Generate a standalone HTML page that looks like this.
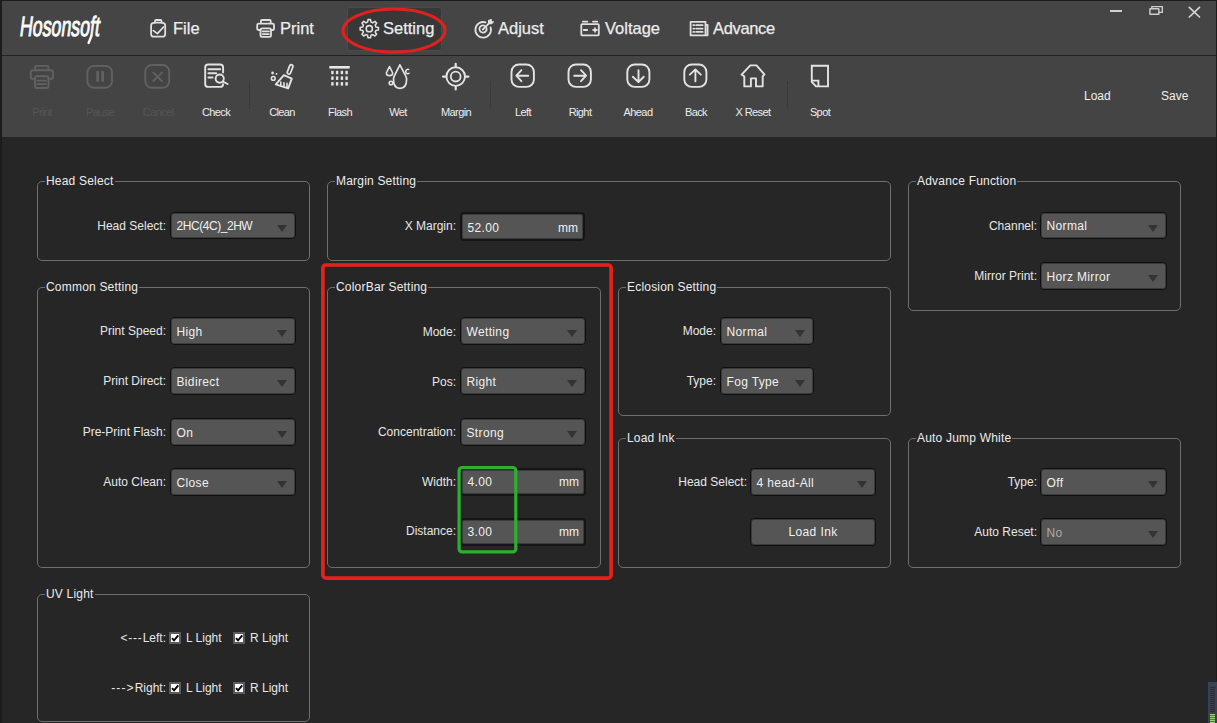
<!DOCTYPE html>
<html><head><meta charset="utf-8"><title>Hosonsoft</title>
<style>
*{box-sizing:border-box;margin:0;padding:0}
html,body{width:1217px;height:723px;overflow:hidden;background:#262626;font-family:"Liberation Sans",sans-serif}
#win{position:absolute;left:0;top:0;width:1217px;height:723px;background:#262626;border-left:2px solid #1c1c1c;border-right:1px solid #1c1c1c;border-top:1px solid #1c1c1c}
#title{position:absolute;left:0;top:0;width:1214px;height:54px;background:#454545}
#sep{position:absolute;left:0;top:54px;width:1214px;height:1px;background:#222}
#tool{position:absolute;left:0;top:55px;width:1214px;height:81px;background:#444444}
.abs{position:absolute}
.gb{position:absolute;border:1px solid #6e6e6e;border-radius:5px}
.gt{position:absolute;left:7px;top:-8px;background:#262626;padding:0 1px;font-size:12px;letter-spacing:0.2px;line-height:14px;color:#ececec;white-space:nowrap}
.lb{position:absolute;font-size:12px;line-height:20px;color:#e6e6e6;white-space:nowrap;text-align:right}
.lb.dis{color:#bdbdbd}
.dd,.inp{position:absolute;background:#555555;border:1px solid #0e0e0e;border-radius:4px;box-shadow:inset 0 0 0 1px rgba(0,0,0,0.3)}

.dd.dis .ddt{color:#a9a9a9}
.inp{border:2px solid #151515;border-top-width:2px}
.ddt{position:absolute;left:5.5px;top:0;font-size:12px;letter-spacing:0.35px;color:#f0f0f0;white-space:nowrap}
.mm{position:absolute;right:5px;top:0;font-size:12px;color:#f0f0f0}
.arr{position:absolute;right:8px;top:50%;margin-top:-1px;width:0;height:0;border-left:5.5px solid transparent;border-right:5.5px solid transparent;border-top:7px solid #333}
.btn{position:absolute;background:#555;border:1px solid #0e0e0e;box-shadow:inset 0 0 0 1px rgba(0,0,0,0.3);border-radius:4px;text-align:center;font-size:12px;letter-spacing:0.4px;color:#f0f0f0}
.cb{position:absolute;width:12px;height:12px;background:#fff;border:2px solid #5a5a5a}
.cb::after{content:"";position:absolute;left:2.5px;top:0.5px;width:2.5px;height:5.5px;border:solid #000;border-width:0 2px 2px 0;transform:rotate(40deg)}
.cbl{position:absolute;font-size:12px;line-height:20px;color:#e6e6e6;white-space:nowrap}
.menu{position:absolute;top:18px;font-size:16.5px;-webkit-text-stroke:0.25px #ececec;line-height:20px;color:#ececec;white-space:nowrap}
.tl{position:absolute;top:104px;font-size:11px;letter-spacing:-0.6px;line-height:16px;color:#ededed;white-space:nowrap;text-align:center;width:60px}
.tl.dis{color:#555}
</style></head><body>
<div id="win">
<div id="title"></div><div id="sep"></div><div id="tool"></div>
</div>
<div class="gb" style="left:37px;top:181px;width:273px;height:80px"><span class="gt">Head Select</span></div>
<div class="lb" style="right:1051px;top:216px">Head Select:</div>
<div class="dd" style="left:170px;top:212px;width:126px;height:27px"><span class="ddt" style="line-height:27px"><span style="letter-spacing:-0.45px">2HC(4C)_2HW</span></span><i class="arr"></i></div>
<div class="gb" style="left:327px;top:181px;width:564px;height:80px"><span class="gt">Margin Setting</span></div>
<div class="lb" style="right:761px;top:216px">X Margin:</div>
<div class="inp" style="left:460px;top:212px;width:125px;height:29px"><span class="ddt" style="line-height:25px;top:2px">52.00</span><span class="mm" style="line-height:25px;top:2px">mm</span></div>
<div class="gb" style="left:908px;top:181px;width:273px;height:130px"><span class="gt">Advance Function</span></div>
<div class="lb" style="right:180px;top:216px">Channel:</div>
<div class="dd" style="left:1040px;top:212px;width:127px;height:27px"><span class="ddt" style="line-height:27px">Normal</span><i class="arr"></i></div>
<div class="lb" style="right:180px;top:266px">Mirror Print:</div>
<div class="dd" style="left:1040px;top:262px;width:127px;height:28px"><span class="ddt" style="line-height:28px">Horz Mirror</span><i class="arr"></i></div>
<div class="gb" style="left:37px;top:287px;width:273px;height:281px"><span class="gt">Common Setting</span></div>
<div class="lb" style="right:1051px;top:321px">Print Speed:</div>
<div class="dd" style="left:170px;top:317px;width:126px;height:28px"><span class="ddt" style="line-height:28px">High</span><i class="arr"></i></div>
<div class="lb" style="right:1051px;top:371px">Print Direct:</div>
<div class="dd" style="left:170px;top:367px;width:126px;height:28px"><span class="ddt" style="line-height:28px">Bidirect</span><i class="arr"></i></div>
<div class="lb" style="right:1051px;top:422px">Pre-Print Flash:</div>
<div class="dd" style="left:170px;top:418px;width:126px;height:28px"><span class="ddt" style="line-height:28px">On</span><i class="arr"></i></div>
<div class="lb" style="right:1051px;top:472px">Auto Clean:</div>
<div class="dd" style="left:170px;top:468px;width:126px;height:28px"><span class="ddt" style="line-height:28px">Close</span><i class="arr"></i></div>
<div class="gb" style="left:327px;top:287px;width:274px;height:281px"><span class="gt">ColorBar Setting</span></div>
<div class="lb" style="right:761px;top:322px">Mode:</div>
<div class="dd" style="left:460px;top:317px;width:126px;height:28px"><span class="ddt" style="line-height:28px">Wetting</span><i class="arr"></i></div>
<div class="lb" style="right:761px;top:372px">Pos:</div>
<div class="dd" style="left:460px;top:367px;width:126px;height:28px"><span class="ddt" style="line-height:28px">Right</span><i class="arr"></i></div>
<div class="lb" style="right:761px;top:422px">Concentration:</div>
<div class="dd" style="left:460px;top:418px;width:126px;height:28px"><span class="ddt" style="line-height:28px">Strong</span><i class="arr"></i></div>
<div class="lb" style="right:761px;top:472px">Width:</div>
<div class="inp" style="left:460px;top:468px;width:126px;height:28px"><span class="ddt" style="line-height:24px;top:0px">4.00</span><span class="mm" style="line-height:24px;top:0px">mm</span></div>
<div class="lb" style="right:761px;top:521px">Distance:</div>
<div class="inp" style="left:460px;top:518px;width:126px;height:28px"><span class="ddt" style="line-height:24px;top:0px">3.00</span><span class="mm" style="line-height:24px;top:0px">mm</span></div>
<div class="gb" style="left:618px;top:287px;width:273px;height:129px"><span class="gt">Eclosion Setting</span></div>
<div class="lb" style="right:501px;top:321px">Mode:</div>
<div class="dd" style="left:720px;top:317px;width:94px;height:28px"><span class="ddt" style="line-height:28px">Normal</span><i class="arr"></i></div>
<div class="lb" style="right:501px;top:371px">Type:</div>
<div class="dd" style="left:720px;top:367px;width:94px;height:28px"><span class="ddt" style="line-height:28px">Fog Type</span><i class="arr"></i></div>
<div class="gb" style="left:618px;top:438px;width:273px;height:130px"><span class="gt">Load Ink</span></div>
<div class="lb" style="right:470px;top:472px">Head Select:</div>
<div class="dd" style="left:750px;top:468px;width:126px;height:28px"><span class="ddt" style="line-height:28px">4 head-All</span><i class="arr"></i></div>
<div class="btn" style="left:750px;top:518px;width:126px;height:28px;line-height:27px">Load Ink</div>
<div class="gb" style="left:908px;top:438px;width:273px;height:130px"><span class="gt">Auto Jump White</span></div>
<div class="lb" style="right:180px;top:472px">Type:</div>
<div class="dd" style="left:1040px;top:468px;width:127px;height:28px"><span class="ddt" style="line-height:28px">Off</span><i class="arr"></i></div>
<div class="lb" style="right:180px;top:522px">Auto Reset:</div>
<div class="dd dis" style="left:1040px;top:518px;width:127px;height:28px"><span class="ddt" style="line-height:28px">No</span><i class="arr"></i></div>
<div class="gb" style="left:37px;top:594px;width:273px;height:128px"><span class="gt">UV Light</span></div>
<div class="lb" style="right:1051px;top:628px"><span style="letter-spacing:0.8px">&lt;---</span>Left:</div>
<svg class="abs" style="left:169px;top:632px" width="12" height="12" viewBox="0 0 12 12"><rect x="1" y="1" width="10" height="10" fill="#fff" stroke="#5c5c5c" stroke-width="2"/><path d="M3 6.1 L5.1 8.4 L9.2 3.4" fill="none" stroke="#000" stroke-width="1.9"/></svg><div class="cbl" style="left:186px;top:628px">L Light</div>
<svg class="abs" style="left:233px;top:632px" width="12" height="12" viewBox="0 0 12 12"><rect x="1" y="1" width="10" height="10" fill="#fff" stroke="#5c5c5c" stroke-width="2"/><path d="M3 6.1 L5.1 8.4 L9.2 3.4" fill="none" stroke="#000" stroke-width="1.9"/></svg><div class="cbl" style="left:250px;top:628px">R Light</div>
<div class="lb" style="right:1051px;top:678px"><span style="letter-spacing:1.1px">---&gt;</span>Right:</div>
<svg class="abs" style="left:169px;top:682px" width="12" height="12" viewBox="0 0 12 12"><rect x="1" y="1" width="10" height="10" fill="#fff" stroke="#5c5c5c" stroke-width="2"/><path d="M3 6.1 L5.1 8.4 L9.2 3.4" fill="none" stroke="#000" stroke-width="1.9"/></svg><div class="cbl" style="left:186px;top:678px">L Light</div>
<svg class="abs" style="left:233px;top:682px" width="12" height="12" viewBox="0 0 12 12"><rect x="1" y="1" width="10" height="10" fill="#fff" stroke="#5c5c5c" stroke-width="2"/><path d="M3 6.1 L5.1 8.4 L9.2 3.4" fill="none" stroke="#000" stroke-width="1.9"/></svg><div class="cbl" style="left:250px;top:678px">R Light</div>
<svg class="abs" style="left:14px;top:8px" width="95" height="40" viewBox="0 0 95 40"><g transform="translate(5,28) scale(1,1.22) skewX(-9)"><text x="0" y="0" font-family="Liberation Sans" font-size="23" fill="#fafafa" stroke="#fafafa" stroke-width="0.8" textLength="80" lengthAdjust="spacingAndGlyphs">Hosonsoft</text></g><path d="M77.2 28.5 L74.6 35" stroke="#fafafa" stroke-width="2.4" stroke-linecap="round"/></svg>
<div class="abs" style="left:347px;top:7px;width:95px;height:44px;background:#383838;border:1px solid #4b4b4b;border-radius:3px"></div>
<div class="menu" style="left:173px">File</div>
<div class="menu" style="left:280px">Print</div>
<div class="menu" style="left:383px">Setting</div>
<div class="menu" style="left:498px">Adjust</div>
<div class="menu" style="left:605px">Voltage</div>
<div class="menu" style="left:713px"><span style="letter-spacing:-0.35px">Advance</span></div>
<svg class="abs" style="left:145px;top:14px" width="30" height="28" viewBox="0 0 30 28" fill="none" stroke="#e0e0e0" stroke-width="1.8" stroke-linecap="round" stroke-linejoin="round"><path d="M10 8.8 H8.9 Q6.1 8.8 6.1 11.6 V19.9 Q6.1 22.7 8.9 22.7 H17.4 Q20.2 22.7 20.2 19.9 V11.6 Q20.2 8.8 17.4 8.8 H16.4"/><rect x="10" y="6" width="6.6" height="2.6" rx="1.2"/><path d="M8.4 16.6 L12.4 19.6 L18.6 13"/></svg>
<svg class="abs" style="left:250px;top:14px" width="30" height="28" viewBox="0 0 30 28" fill="none" stroke="#e0e0e0" stroke-width="1.8" stroke-linecap="round" stroke-linejoin="round"><path d="M10.9 9 V7 Q10.9 6 11.9 6 H19.7 Q20.7 6 20.7 7 V9"/><path d="M10.5 16 H8.8 Q7.2 16 7.2 14.4 V11.4 Q7.2 9.7 8.8 9.7 H22.4 Q24 9.7 24 11.4 V14.4 Q24 16 22.4 16 H21"/><rect x="10.5" y="14.4" width="10.5" height="8.4" rx="1.6"/><path d="M12.6 17.3 H18.9 M12.6 20.1 H18.9"/></svg>
<svg class="abs" style="left:354px;top:14px" width="30" height="28" viewBox="0 0 30 28" fill="none" stroke="#e0e0e0" stroke-width="1.6" stroke-linecap="round" stroke-linejoin="round"><path d="M14.08 5.58 L16.52 5.58 L17.04 8.13 L18.72 8.82 L20.88 7.39 L22.61 9.12 L21.18 11.28 L21.87 12.96 L24.42 13.48 L24.42 15.92 L21.87 16.44 L21.18 18.12 L22.61 20.28 L20.88 22.01 L18.72 20.58 L17.04 21.27 L16.52 23.82 L14.08 23.82 L13.56 21.27 L11.88 20.58 L9.72 22.01 L7.99 20.28 L9.42 18.12 L8.73 16.44 L6.18 15.92 L6.18 13.48 L8.73 12.96 L9.42 11.28 L7.99 9.12 L9.72 7.39 L11.88 8.82 L13.56 8.13 Z"/><circle cx="15.3" cy="14.7" r="3.1"/></svg>
<svg class="abs" style="left:470px;top:14px" width="30" height="28" viewBox="0 0 30 28" fill="none" stroke="#e0e0e0" stroke-width="1.8" stroke-linecap="round" stroke-linejoin="round"><path d="M15.6 8.4 A7.8 7.8 0 1 0 20.6 13.4"/><path d="M14.6 11.8 A3.6 3.6 0 1 0 16.4 13.8"/><path d="M12.8 15.5 L19.2 9.1"/><path d="M18.6 6.6 V9.6 H21.6 L23.4 7.8 L21.4 7.6 L21.2 5.6 Z" fill="#e0e0e0" stroke-width="1.2"/></svg>
<svg class="abs" style="left:576px;top:14px" width="30" height="28" viewBox="0 0 30 28" fill="none" stroke="#e0e0e0" stroke-width="1.8" stroke-linecap="round" stroke-linejoin="round"><rect x="5.3" y="10.1" width="17.5" height="11.2" rx="0.8"/><path d="M6.9 7.6 H11.4 M17 7.6 H21.3 M7.8 16 H11.2 M17.2 16 H20.8 M19 14.2 V17.8"/></svg>
<svg class="abs" style="left:685px;top:14px" width="30" height="28" viewBox="0 0 30 28" fill="none" stroke="#e0e0e0" stroke-width="1.8" stroke-linecap="round" stroke-linejoin="round"><path d="M20.5 11 H22.6 V21.3 H5.6 V7.8 H20.5 V21.3"/><path d="M8.3 11.2 H9.3 M11.2 11.2 H17.6 M8.3 14.6 H9.3 M11.2 14.6 H17.6 M8.3 17.9 H9.3 M11.2 17.9 H17.6"/></svg>
<div class="abs" style="left:1110px;top:9.5px;width:12px;height:2px;background:#cfcfcf"></div>
<svg class="abs" style="left:1146px;top:4px" width="20" height="14" viewBox="0 0 20 14" fill="none" stroke="#cfcfcf" stroke-width="1.4" stroke-linecap="round" stroke-linejoin="round"><rect x="3.9" y="4.7" width="9" height="5.6" rx="0.4"/><path d="M5.8 4.5 V2.6 H16.3 V8.4 H13"/></svg>
<svg class="abs" style="left:1186px;top:5px" width="16" height="14" viewBox="0 0 16 14" fill="none" stroke="#d4d4d4" stroke-width="1.7" stroke-linecap="round" stroke-linejoin="round"><path d="M3.3 2.4 L13.5 12 M13.5 2.4 L3.3 12"/></svg>
<svg class="abs" style="left:26px;top:60px" width="32" height="32" viewBox="0 0 32 32" fill="none" stroke="#616161" stroke-width="1.9" stroke-linecap="round" stroke-linejoin="round"><path d="M9.2 9.3 V7 Q9.2 5.9 10.3 5.9 H21.4 Q22.5 5.9 22.5 7 V9.3"/><path d="M9 18.9 H6.8 Q4.8 18.9 4.8 16.9 V12.3 Q4.8 10.3 6.8 10.3 H24.9 Q26.9 10.3 26.9 12.3 V16.9 Q26.9 18.9 24.9 18.9 H22.5"/><rect x="9" y="16.3" width="13.5" height="11.7" rx="2"/><path d="M11.2 20.6 H20 M11.2 24.1 H20"/></svg>
<svg class="abs" style="left:84px;top:60px" width="32" height="32" viewBox="0 0 32 32" fill="none" stroke="#616161" stroke-width="1.9" stroke-linecap="round" stroke-linejoin="round"><rect x="3.4" y="5.9" width="24.6" height="21.9" rx="6.5"/><rect x="12.2" y="11" width="2.8" height="10.7" fill="#616161" stroke="none" rx="0.4"/><rect x="17.2" y="11" width="2.8" height="10.7" fill="#616161" stroke="none" rx="0.4"/></svg>
<svg class="abs" style="left:141px;top:60px" width="32" height="32" viewBox="0 0 32 32" fill="none" stroke="#616161" stroke-width="1.9" stroke-linecap="round" stroke-linejoin="round"><rect x="4.3" y="5" width="23.9" height="22.8" rx="6.5"/><path d="M12.3 12.6 L20.9 21 M20.9 12.6 L12.3 21"/></svg>
<svg class="abs" style="left:200px;top:60px" width="32" height="32" viewBox="0 0 32 32" fill="none" stroke="#e3e3e3" stroke-width="1.9" stroke-linecap="round" stroke-linejoin="round"><path d="M23.1 12.6 V7.5 Q23.1 4.5 20.1 4.5 H8.2 Q5.2 4.5 5.2 7.5 V23.9 Q5.2 26.9 8.2 26.9 H20.1 Q23.1 26.9 23.1 24.2"/><path d="M8.4 9.3 H20.2 M8.4 13.3 H16.2 M8.4 17.5 H12.6"/><circle cx="19.7" cy="18.6" r="4.1"/><path d="M22.9 21.6 L27.6 24"/></svg>
<div class="abs" style="left:249px;top:81px;width:1px;height:28px;background:#3a3a3a"></div>
<div class="abs" style="left:490px;top:81px;width:1px;height:28px;background:#3a3a3a"></div>
<div class="abs" style="left:787px;top:81px;width:1px;height:28px;background:#3a3a3a"></div>
<svg class="abs" style="left:266px;top:60px" width="32" height="32" viewBox="0 0 32 32" fill="none" stroke="#e3e3e3" stroke-width="1.8" stroke-linecap="round" stroke-linejoin="round"><rect x="-1.7" y="-4.9" width="3.4" height="9.8" rx="1.7" transform="translate(24.1,9.4) rotate(21)" stroke-width="1.8"/><path d="M17.9 15.2 L25.8 18.7 L22.2 28.4 L9.8 24.4 Z" stroke-width="1.9"/><path d="M14.8 22 V26.2 M18 22.8 V27.2 M21 23.4 V27.8" stroke-width="1.6"/><circle cx="6.6" cy="13" r="1.4" fill="#e3e3e3" stroke="none"/><circle cx="10.5" cy="13.9" r="0.9" fill="#e3e3e3" stroke="none"/><circle cx="7.3" cy="18.4" r="1.9" stroke-width="1.5"/></svg>
<svg class="abs" style="left:324px;top:60px" width="32" height="32" viewBox="0 0 32 32" fill="none" stroke="#e3e3e3" stroke-width="1.8" stroke-linecap="round" stroke-linejoin="round"><rect x="5.3" y="6" width="20.4" height="2.6" fill="#e8e8e8" stroke="none"/><rect x="7.2" y="10.8" width="2.4" height="3.4" fill="#e3e3e3" stroke="none"/><rect x="7.2" y="16.4" width="2.4" height="3.5" fill="#e3e3e3" stroke="none"/><rect x="7.2" y="22.1" width="2.4" height="3.5" fill="#e3e3e3" stroke="none"/><rect x="11.9" y="10.8" width="2.4" height="3.4" fill="#e3e3e3" stroke="none"/><rect x="11.9" y="16.4" width="2.4" height="3.5" fill="#e3e3e3" stroke="none"/><rect x="11.9" y="22.1" width="2.4" height="3.5" fill="#e3e3e3" stroke="none"/><rect x="16.7" y="10.8" width="2.4" height="3.4" fill="#e3e3e3" stroke="none"/><rect x="16.7" y="16.4" width="2.4" height="3.5" fill="#e3e3e3" stroke="none"/><rect x="16.7" y="22.1" width="2.4" height="3.5" fill="#e3e3e3" stroke="none"/><rect x="21.4" y="10.8" width="2.4" height="3.4" fill="#e3e3e3" stroke="none"/><rect x="21.4" y="16.4" width="2.4" height="3.5" fill="#e3e3e3" stroke="none"/><rect x="21.4" y="22.1" width="2.4" height="3.5" fill="#e3e3e3" stroke="none"/></svg>
<svg class="abs" style="left:382px;top:60px" width="32" height="32" viewBox="0 0 32 32" fill="none" stroke="#e3e3e3" stroke-width="1.8" stroke-linecap="round" stroke-linejoin="round"><path d="M17.9 4.8 L12.2 16.2 Q11.5 17.8 11.5 19.6 Q11.5 28.4 17.9 28.4 Q24.6 28.4 24.6 19.6 Q24.6 17.8 23.8 16.2 Z" stroke-width="1.7"/><path d="M7.5 6.5 L4.8 11.8 Q4.4 12.5 4.4 13.2 Q4.4 15.6 7.5 15.6 Q10.6 15.6 10.6 13.2 Q10.6 12.5 10.2 11.8 Z" stroke-width="1.6"/><path d="M26.6 9.4 A2.2 2.2 0 1 0 27 13.4" stroke-width="1.6"/><circle cx="9" cy="23" r="1.8" stroke-width="1.6"/></svg>
<svg class="abs" style="left:440px;top:60px" width="32" height="32" viewBox="0 0 32 32" fill="none" stroke="#e3e3e3" stroke-width="1.8" stroke-linecap="round" stroke-linejoin="round"><circle cx="15.7" cy="16.6" r="9.3" stroke-width="1.9"/><circle cx="15.7" cy="16.6" r="4.9" stroke-width="1.8"/><path d="M15.7 3.8 V7 M15.7 26.2 V29.4 M3 16.6 H6.2 M25.2 16.6 H28.4" stroke-width="2.2"/></svg>
<svg class="abs" style="left:507px;top:60px" width="32" height="32" viewBox="0 0 32 32" fill="none" stroke="#e3e3e3" stroke-width="1.9" stroke-linecap="round" stroke-linejoin="round"><rect x="4.5" y="4.5" width="22.4" height="22.4" rx="7.5"/><path d="M14.4 10.2 L9.3 15.7 L14.4 21.2 M9.6 15.7 H21.2"/></svg>
<svg class="abs" style="left:564px;top:60px" width="32" height="32" viewBox="0 0 32 32" fill="none" stroke="#e3e3e3" stroke-width="1.9" stroke-linecap="round" stroke-linejoin="round"><rect x="4.5" y="4.5" width="22.4" height="22.4" rx="7.5"/><path d="M17 10.2 L22.1 15.7 L17 21.2 M21.8 15.7 H10.2"/></svg>
<svg class="abs" style="left:621px;top:60px" width="32" height="32" viewBox="0 0 32 32" fill="none" stroke="#e3e3e3" stroke-width="1.9" stroke-linecap="round" stroke-linejoin="round"><rect x="6.3" y="4.5" width="22.1" height="22.4" rx="7.5"/><path d="M17.5 10.2 V21.4 M11.8 16.8 L17.5 22 L22.8 16.8"/></svg>
<svg class="abs" style="left:679px;top:60px" width="32" height="32" viewBox="0 0 32 32" fill="none" stroke="#e3e3e3" stroke-width="1.9" stroke-linecap="round" stroke-linejoin="round"><rect x="5.3" y="4.5" width="22.1" height="22.4" rx="7.5"/><path d="M16.4 21.4 V10.2 M10.8 14.6 L16.4 9.4 L21.8 14.6"/></svg>
<svg class="abs" style="left:737px;top:60px" width="32" height="32" viewBox="0 0 32 32" fill="none" stroke="#e3e3e3" stroke-width="1.8" stroke-linecap="round" stroke-linejoin="round"><path d="M7.3 16.6 L4.6 14.6 L13.3 5.4 H19.5 L27.4 14.4 L25.7 16.4 V26.4 H19 V18.4 H13.9 V26.4 H7.3 Z" stroke-width="1.9"/></svg>
<svg class="abs" style="left:804px;top:60px" width="32" height="32" viewBox="0 0 32 32" fill="none" stroke="#e3e3e3" stroke-width="1.8" stroke-linecap="round" stroke-linejoin="round"><path d="M7.8 5.8 H24 V26.4 H12 L7.8 21.8 Z M8.4 20.6 H14.4 V26.2" stroke-width="1.9" stroke-linejoin="miter" stroke-linecap="butt"/></svg>
<div class="tl dis" style="left:12px">Print</div>
<div class="tl dis" style="left:70px">Pause</div>
<div class="tl dis" style="left:128px">Cancel</div>
<div class="tl" style="left:186px">Check</div>
<div class="tl" style="left:252px">Clean</div>
<div class="tl" style="left:310px">Flash</div>
<div class="tl" style="left:368px">Wet</div>
<div class="tl" style="left:426px">Margin</div>
<div class="tl" style="left:493px">Left</div>
<div class="tl" style="left:550px">Right</div>
<div class="tl" style="left:608px">Ahead</div>
<div class="tl" style="left:666px">Back</div>
<div class="tl" style="left:723px">X Reset</div>
<div class="tl" style="left:790px">Spot</div>
<div class="abs" style="left:1084px;top:88px;font-size:12px;line-height:16px;color:#efefef">Load</div>
<div class="abs" style="left:1161px;top:88px;font-size:12px;line-height:16px;color:#efefef">Save</div>
<svg class="abs" style="left:0;top:0" width="1217" height="723" viewBox="0 0 1217 723"><rect x="322.9" y="265" width="288.2" height="313.1" rx="3" fill="none" stroke="#e3231b" stroke-width="3.7"/><rect x="459.1" y="467.6" width="56.7" height="84.3" rx="3" fill="none" stroke="#2db02f" stroke-width="3.2"/></svg>
<svg class="abs" style="left:336px;top:3px" width="116" height="54" viewBox="0 0 116 54"><ellipse cx="58" cy="27.6" rx="51" ry="21.6" fill="none" stroke="#e0211d" stroke-width="3"/></svg>
<div class="abs" style="left:1206px;top:681px;width:11px;height:42px;background:#22262e;border-radius:2px 0 0 0"></div>
<div class="abs" style="left:1208px;top:682px;width:9px;height:41px;background:#3b4150"></div>
<div class="abs" style="left:1210px;top:687px;width:5px;height:25px;background:repeating-linear-gradient(#262a33 0 1px, transparent 1px 2px)"></div>
<div class="abs" style="left:1210px;top:714px;width:5px;height:9px;background:repeating-linear-gradient(#9ccf7a 0 1px, #4d7a4a 1px 2px)"></div>
</body></html>
